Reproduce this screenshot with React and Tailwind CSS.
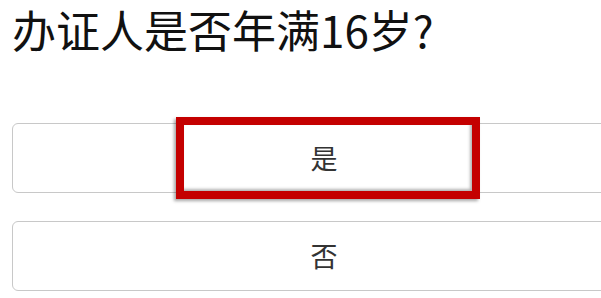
const options = ["是", "否"];

const App = () => {
  return (
    <div
      className="w-[601px] h-[298px] overflow-hidden bg-white px-[12px]"
      style={{ fontFamily: '"Noto Sans CJK SC", "Liberation Sans", sans-serif' }}
    >
      <h1 className="pt-[3px] text-[44px] leading-[52px] text-[#111] font-normal whitespace-nowrap">
        办证人是否年满16岁?
      </h1>
      <div className="mt-[68px] flex flex-col gap-[28px]">
        {options.map((opt, i) => (
          <div key={i} className="relative">
            <button className="w-[624px] h-[70px] rounded-[6px] border border-[#c8c8c8] bg-white text-[27px] text-[#333] flex items-center justify-center">
              {opt}
            </button>
            {i === 0 && (
              <div className="absolute left-[164px] top-[-6px] w-[304px] h-[82px] border-[8px] border-[#c40000] shadow-[-2px_2px_3px_rgba(0,0,0,0.35),inset_-2px_-2px_3px_rgba(0,0,0,0.3)]" />
            )}
          </div>
        ))}
      </div>
    </div>
  );
};

export default App;
